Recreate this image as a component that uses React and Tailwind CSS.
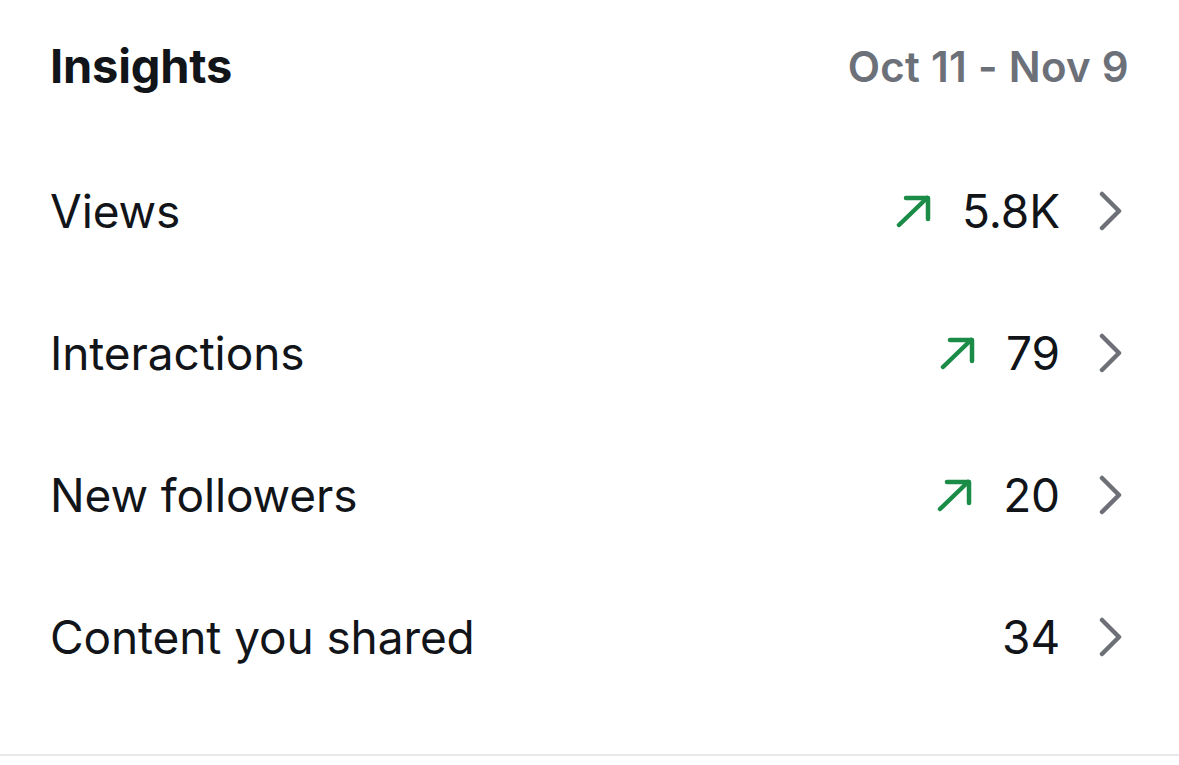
const rows = [
  { label: 'Views', value: '5.8K', up: true },
  { label: 'Interactions', value: '79', up: true },
  { label: 'New followers', value: '20', up: true },
  { label: 'Content you shared', value: '34', up: false },
];

function UpArrow() {
  return (
    <svg width="36" height="34" viewBox="0 0 36 34" fill="none" className="shrink-0">
      <path d="M3 31 L31 4" stroke="#1b8c47" strokeWidth="4.5" strokeLinecap="round" />
      <path d="M10 4 H32 V25" stroke="#1b8c47" strokeWidth="4.5" strokeLinecap="round" strokeLinejoin="round" fill="none" />
    </svg>
  );
}

function Chevron() {
  return (
    <svg width="26" height="40" viewBox="0 0 26 40" fill="none" className="shrink-0">
      <path d="M4 3 L21 20 L4 37" stroke="#6d7076" strokeWidth="4.5" strokeLinecap="round" strokeLinejoin="round" />
    </svg>
  );
}

export default function App() {
  return (
    <div className="w-[1179px] h-[765px] bg-white overflow-hidden" style={{ fontFamily: 'Inter, "Noto Sans", sans-serif' }}>
      <div className="border-b-2 border-[#e9e9eb] pb-[46px]">
        <div className="flex items-center justify-between px-[50px] h-[134px] pb-[1px]">
          <h2 className="text-[47px] font-bold text-[#111418] tracking-[-0.2px]">Insights</h2>
          <span className="text-[42px] font-semibold text-[#6c7079] tracking-[0.3px]">Oct 11 - Nov 9</span>
        </div>
        <div className="mt-[6px]">
          {rows.map((r) => (
            <div key={r.label} className="flex items-center justify-between h-[142px] pl-[50px] pr-[55px]">
              <span className="text-[46px] text-[#111418] tracking-[-0.1px]">{r.label}</span>
              <div className="flex items-center">
                {r.up && <div className="mr-[30px]"><UpArrow /></div>}
                <span className="text-[46px] text-[#111418] tracking-[-0.1px]">{r.value}</span>
                <div className="ml-[38px]"><Chevron /></div>
              </div>
            </div>
          ))}
        </div>
      </div>
    </div>
  );
}
